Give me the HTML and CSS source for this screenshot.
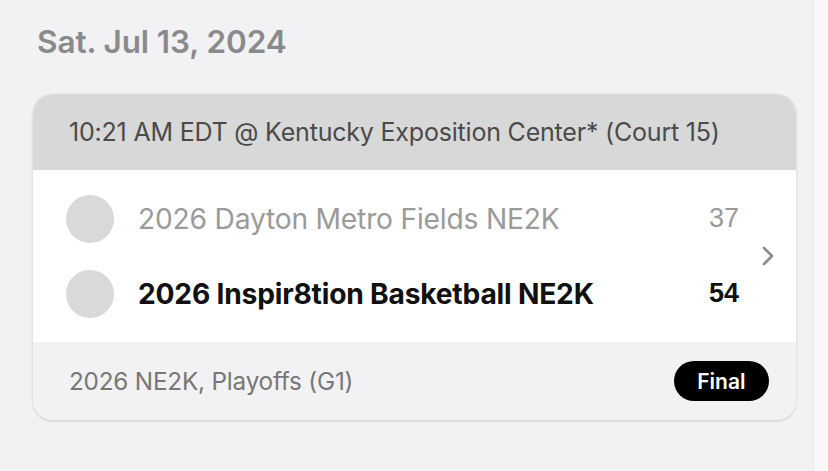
FILE: index.html
```html
<!DOCTYPE html>
<html>
<head>
<meta charset="utf-8">
<link rel="stylesheet" href="styles.css">
</head>
<body>
<div class="page">
  <main class="main">
    <h1 class="date">Sat. Jul 13, 2024</h1>
    <section class="card">
      <header class="card-head">10:21 AM EDT @ Kentucky Exposition Center* (Court 15)</header>
      <div class="card-body">
        <div class="teams">
          <div class="team loser">
            <span class="avatar"></span>
            <span class="name">2026 Dayton Metro Fields NE2K</span>
            <span class="score">37</span>
          </div>
          <div class="team winner">
            <span class="avatar"></span>
            <span class="name">2026 Inspir8tion Basketball NE2K</span>
            <span class="score">54</span>
          </div>
        </div>
        <svg class="chevron" width="12" height="20" viewBox="0 0 12 20"><path d="M2 2 L10 10 L2 18" fill="none" stroke="#8a8a8c" stroke-width="2.6" stroke-linecap="round" stroke-linejoin="round"/></svg>
      </div>
      <footer class="card-foot">
        <span class="event">2026 NE2K, Playoffs (G1)</span>
        <span class="pill">Final</span>
      </footer>
    </section>
  </main>
  <div class="edge"></div>
</div>
</body>
</html>
```
FILE: styles.css
```css
html, body {
  margin: 0;
  padding: 0;
  background: #f2f2f4;
}
body {
  font-family: Inter, "Noto Sans", sans-serif;
  width: 828px;
  height: 471px;
  overflow: hidden;
}
.page {
  display: flex;
  height: 471px;
}
.main {
  width: 814px;
  padding: 24px 0 0 33px;
  box-sizing: border-box;
}
.edge {
  width: 14px;
  background: #f8f8fa;
  border-left: 1px solid #ececee;
}
.date {
  margin: 0 0 0 4px;
  font-size: 31.5px;
  font-weight: 600;
  color: #8a8a8c;
  line-height: 36px;
  letter-spacing: -0.1px;
}
.card {
  margin-top: 34px;
  width: 763px;
  border-radius: 20px;
  overflow: hidden;
  background: #fff;
  box-shadow: 0 1px 3px rgba(0,0,0,0.18);
}
.card-head {
  background: #d9d8d9;
  height: 76px;
  display: flex;
  align-items: center;
  padding-left: 36px;
  font-size: 25px;
  color: #4a4a4a;
  letter-spacing: -0.2px;
}
.card-body {
  display: flex;
  align-items: center;
  height: 172px;
  background: #fff;
}
.teams {
  flex: 1;
  display: flex;
  flex-direction: column;
  gap: 27px;
  padding-left: 33px;
}
.team {
  display: flex;
  align-items: center;
  height: 48px;
}
.avatar {
  width: 48px;
  height: 48px;
  border-radius: 50%;
  background: #d9d9d9;
  flex: none;
}
.name {
  flex: 1;
  margin-left: 24px;
  font-size: 28.2px;
  letter-spacing: -0.2px;
}
.loser .name { color: #9a9a9a; }
.winner .name { color: #111; font-weight: 650; }
.score {
  font-family: "Liberation Sans", Arial, sans-serif;
  font-size: 27px;
  width: 60px;
  text-align: right;
}
.loser .score { color: #9a9a9a; }
.winner .score { color: #111; font-weight: 700; }
.chevron {
  margin: 0 22px 0 23px;
  flex: none;
}
.card-foot {
  background: #f2f2f4;
  height: 78px;
  display: flex;
  align-items: center;
  justify-content: space-between;
  padding: 0 27px 0 36px;
}
.event {
  font-size: 24.3px;
  color: #777;
  letter-spacing: -0.2px;
}
.pill {
  background: #000;
  color: #fff;
  font-weight: 600;
  font-size: 21px;
  height: 40px;
  padding: 0 23.5px;
  border-radius: 20px;
  display: flex;
  align-items: center;
}
```
